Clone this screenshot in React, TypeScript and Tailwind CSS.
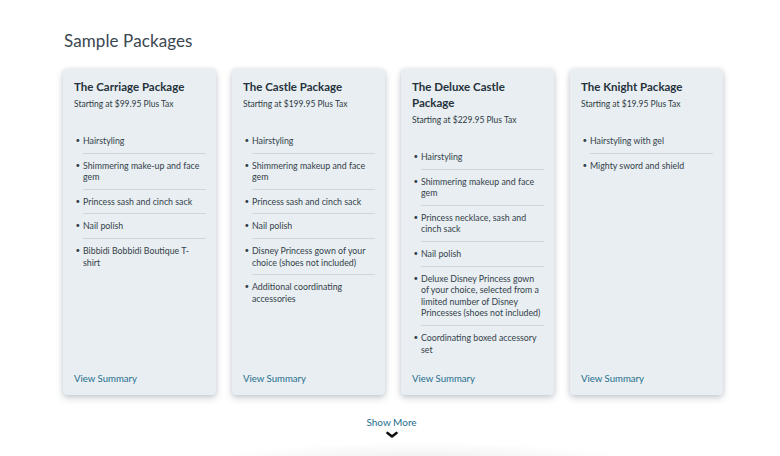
const packages = [
  {
    name: "The Carriage Package",
    price: "Starting at $99.95 Plus Tax",
    items: [
      "Hairstyling",
      "Shimmering make-up and face gem",
      "Princess sash and cinch sack",
      "Nail polish",
      "Bibbidi Bobbidi Boutique T-shirt",
    ],
  },
  {
    name: "The Castle Package",
    price: "Starting at $199.95 Plus Tax",
    items: [
      "Hairstyling",
      "Shimmering makeup and face gem",
      "Princess sash and cinch sack",
      "Nail polish",
      "Disney Princess gown of your choice (shoes not included)",
      "Additional coordinating accessories",
    ],
  },
  {
    name: "The Deluxe Castle Package",
    price: "Starting at $229.95 Plus Tax",
    items: [
      "Hairstyling",
      "Shimmering makeup and face gem",
      "Princess necklace, sash and cinch sack",
      "Nail polish",
      "Deluxe Disney Princess gown of your choice, selected from a limited number of Disney Princesses (shoes not included)",
      "Coordinating boxed accessory set",
    ],
  },
  {
    name: "The Knight Package",
    price: "Starting at $19.95 Plus Tax",
    items: ["Hairstyling with gel", "Mighty sword and shield"],
  },
];

function PackageCard({ pkg }: { pkg: (typeof packages)[number] }) {
  return (
    <div className="w-[153px] h-[326px] flex flex-col bg-[#e8eef1] rounded-[4px] shadow-[0_3px_7px_rgba(40,60,80,0.24),0_0_4px_rgba(40,60,80,0.1)] pt-[10px] pl-[11px] pr-[10px] pb-[9px]">
      <h3 className="text-[11.5px] leading-[16px] font-bold text-[#26323c]">{pkg.name}</h3>
      <p className="mt-[2px] text-[8.5px] leading-[14px] text-[#2e3a44]">{pkg.price}</p>
      <ul className="mt-[18px] ml-[9px]">
        {pkg.items.map((item, i) => (
          <li
            key={i}
            className={`relative py-[6px] text-[8.8px] leading-[11.6px] text-[#34414b] ${
              i < pkg.items.length - 1 ? "border-b border-[#cfd7dc]" : ""
            }`}
          >
            <span className="absolute left-[-7.5px] top-[6px] text-[8px]">•</span>
            {item}
          </li>
        ))}
      </ul>
      <a className="mt-auto text-[9.6px] leading-[14px] text-[#1f6e8d] cursor-pointer">View Summary</a>
    </div>
  );
}

export default function App() {
  return (
    <div
      className="relative w-[780px] h-[456px] overflow-hidden bg-white"
      style={{ fontFamily: "Lato, 'Noto Sans', sans-serif" }}
    >
      <div className="pl-[64px] pt-[29px]">
        <h2 className="text-[17px] leading-[24px] text-[#3a4650] tracking-[0.1px]">Sample Packages</h2>
        <div className="mt-[16px] -ml-[1px] flex gap-4">
          {packages.map((pkg) => (
            <PackageCard key={pkg.name} pkg={pkg} />
          ))}
        </div>
      </div>
      <div className="flex flex-col items-center mt-[20px] ml-[3px]">
        <span className="text-[10px] leading-[14px] text-[#1f6e8d]">Show More</span>
        <svg width="12" height="8" viewBox="0 0 12 8" className="mt-[2px]">
          <path d="M1.5 2 L6 5.5 L10.5 2" stroke="#111" strokeWidth="2.6" fill="none" strokeLinecap="round" strokeLinejoin="round" />
        </svg>
      </div>
      <div className="absolute left-[200px] top-[442px] w-[440px] h-[40px] rounded-[50%] bg-[radial-gradient(ellipse_at_center,rgba(0,0,0,0.07),rgba(0,0,0,0)_70%)]" />
    </div>
  );
}
